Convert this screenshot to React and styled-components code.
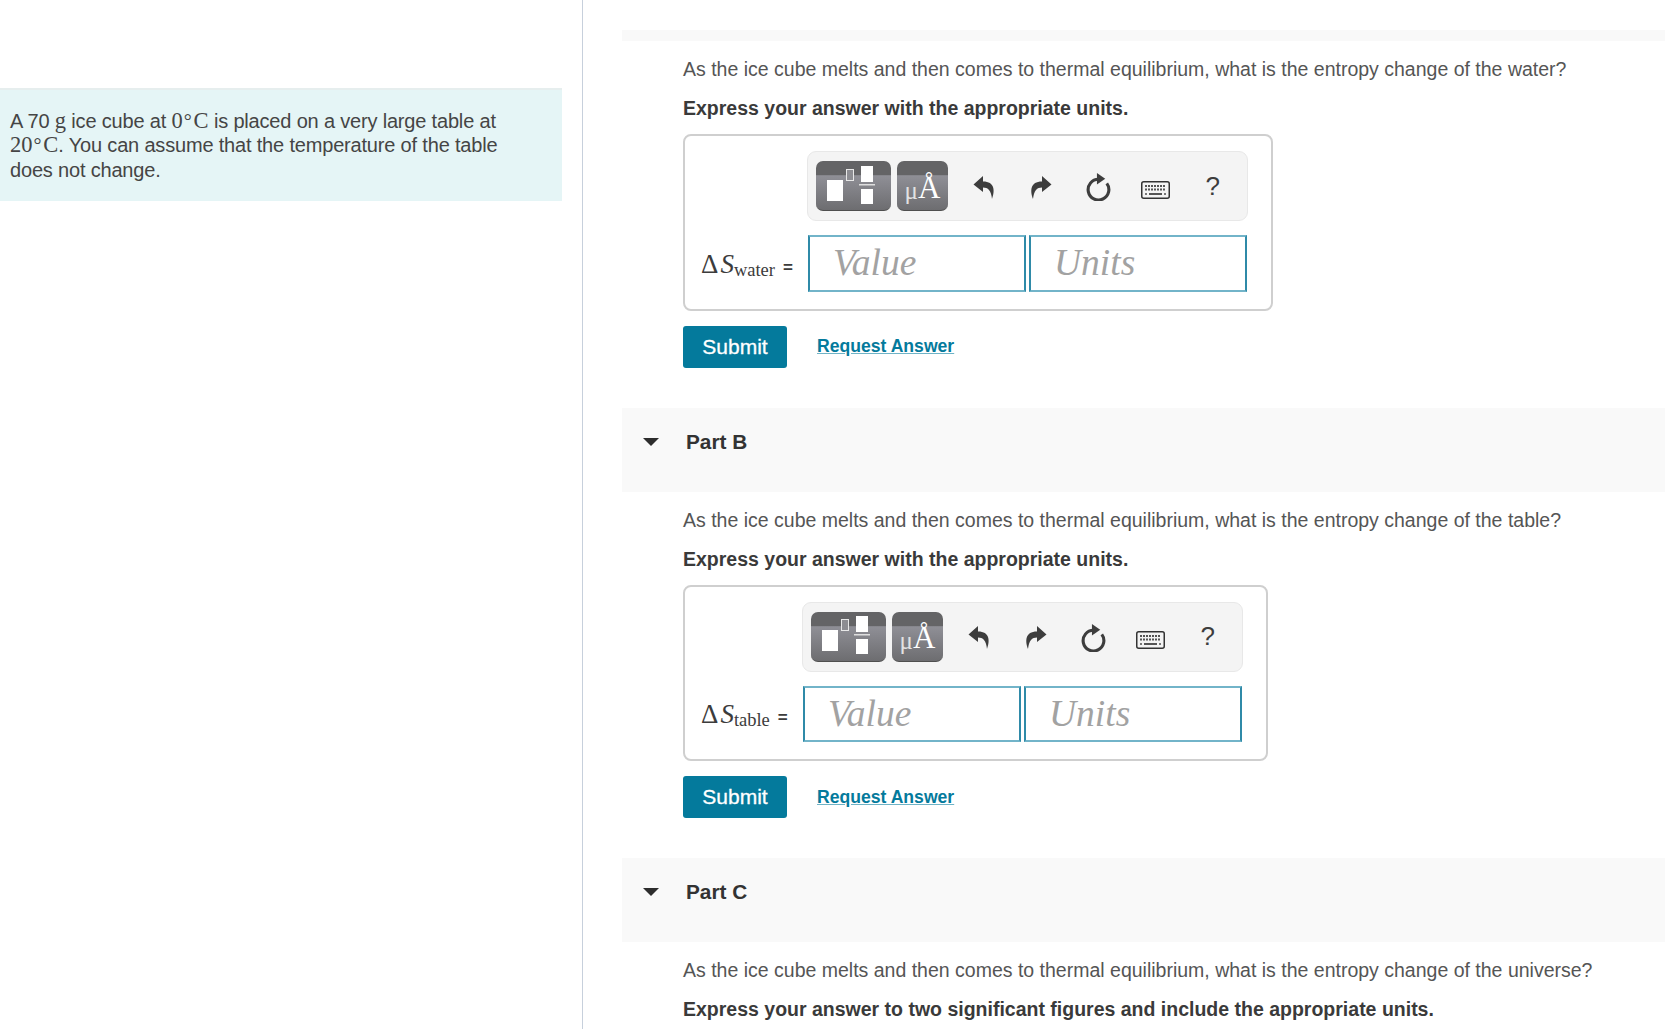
import React from 'react';
import styled, { createGlobalStyle } from 'styled-components';

const GlobalStyle = createGlobalStyle`
  html, body {
    margin: 0;
    padding: 0;
    height: 1029px;
    overflow: hidden;
    background: #fff;
    font-family: "Liberation Sans", Arial, sans-serif;
  }
`;

const Page = styled.div`
  display: flex;
  height: 1029px;
  overflow: hidden;
`;

const LeftColumn = styled.aside`
  flex: 0 0 583px;
  box-sizing: border-box;
  height: 1029px;
  padding: 88px 20px 0 0;
  border-right: 1px solid #c7d0dc;
`;

const Intro = styled.div`
  box-sizing: border-box;
  height: 113px;
  padding: 18.5px 50px 0 10px;
  border-top: 2px solid #e6eeee;
  background: #e5f5f6;
  color: #454545;
  font-size: 20px;
  line-height: 24.5px;
  letter-spacing: -0.18px;
`;

const MathText = styled.span`
  font-family: "Liberation Serif", "DejaVu Serif", serif;
  font-size: 22.5px;
  line-height: 20px;
  letter-spacing: 0;
`;

const Degree = styled.span`
  margin: 0 2px 0 1px;
  font-family: "Liberation Serif", serif;
  font-size: 20px;
  line-height: 20px;
`;

const RightColumn = styled.main`
  flex: 1;
  min-width: 0;
  padding: 30px 0 0 39px;
`;

const PartHeader = styled.div`
  display: flex;
  align-items: flex-start;
  box-sizing: border-box;
  height: ${(p) => (p.$slim ? '11px' : '84px')};
  padding: ${(p) => (p.$slim ? '0' : '19px 0 0 21px')};
  background: #f9f9f9;
`;

const Caret = styled.span`
  width: 0;
  height: 0;
  margin: 11px 27px 0 0;
  border-left: 8px solid transparent;
  border-right: 8px solid transparent;
  border-top: 8px solid #2d2d2d;
`;

const PartTitle = styled.h3`
  margin: 0;
  color: #333;
  font-size: 20.8px;
  line-height: 30px;
  font-weight: 700;
`;

const PartBody = styled.section`
  padding: 15px 0 0 61px;
  height: ${(p) => (p.$tail ? '100px' : '366.5px')};
  box-sizing: border-box;
`;

const Question = styled.p`
  margin: 0;
  color: #555;
  font-size: 19.5px;
  line-height: 26px;
`;

const Instruction = styled.p`
  margin: 13px 0 0;
  color: #3a3a3a;
  font-size: 19.5px;
  line-height: 26px;
  font-weight: 700;
`;

const AnswerBox = styled.div`
  display: flex;
  align-items: flex-end;
  box-sizing: border-box;
  width: ${(p) => p.$width}px;
  height: 176.5px;
  margin-top: 13px;
  padding: 0 23px 17px 16px;
  border: 2px solid #cfcfcf;
  border-radius: 8px;
`;

const Formula = styled.div`
  flex: 1;
  display: flex;
  align-items: baseline;
  height: 56px;
  line-height: 56px;
  color: #3c3c3c;
  font-family: "Liberation Serif", "DejaVu Serif", serif;
  font-size: 27px;
  white-space: nowrap;
`;

const Italic = styled.i`
  margin-left: 2px;
`;

const Sub = styled.sub`
  font-size: 18.5px;
  line-height: 0;
  vertical-align: -4px;
  position: relative;
  top: 3px;
`;

const Equals = styled.span`
  margin-left: 8px;
  font-family: "Liberation Sans", Arial, sans-serif;
  font-size: 17px;
  font-weight: 700;
`;

const Editor = styled.div`
  flex: 0 0 441px;
  display: flex;
  flex-direction: column;
  gap: 14px;
`;

const Toolbar = styled.div`
  display: flex;
  align-items: center;
  box-sizing: border-box;
  height: 70px;
  padding: 0 0 0 8px;
  border: 1px solid #e8e8e8;
  border-radius: 9px;
  background: #f4f4f4;
`;

const TemplateButton = styled.div`
  display: flex;
  align-items: center;
  justify-content: center;
  flex: 0 0 ${(p) => p.$width}px;
  box-sizing: border-box;
  height: 50px;
  margin-right: 6px;
  padding-top: ${(p) => p.$drop || 0}px;
  border-radius: 7px;
  border-bottom: 1px solid #4f4f4f;
  background: linear-gradient(#646466 0, #646466 28%, #8f8f96 30%, #6d6d70 100%);
  color: #fff;
  font-family: "Liberation Serif", serif;
  font-size: 31px;
  line-height: 46px;
`;

const MicroSign = styled.span`
  padding-top: 6px;
  font-size: 25px;
  color: #e2e2e2;
`;

const ToolIcons = styled.div`
  display: flex;
  align-items: center;
  margin-left: 1px;
`;

const ToolSlot = styled.div`
  display: flex;
  align-items: center;
  justify-content: center;
  width: 57.3px;
  height: 50px;
  padding-top: ${(p) => p.$drop || 0}px;
  box-sizing: border-box;
  color: #3d3d3d;
  font-size: 26px;
`;

const Fields = styled.div`
  display: flex;
  gap: 3px;
  padding: 0 1px;
`;

const Field = styled.div`
  flex: 1;
  box-sizing: border-box;
  height: 56.5px;
  padding-left: 23px;
  border: 2px solid #72b4c9;
  border-left-color: #2f8aa8;
  border-right-color: #2f8aa8;
  color: #a2a2a2;
  font-family: "Liberation Serif", serif;
  font-style: italic;
  font-size: 37.5px;
  line-height: 52px;
`;

const Actions = styled.div`
  display: flex;
  align-items: center;
  margin-top: 15px;
`;

const SubmitButton = styled.div`
  width: 104px;
  height: 42px;
  border-radius: 3px;
  background: #047a9c;
  color: #fff;
  font-size: 21px;
  line-height: 42px;
  text-align: center;
  -webkit-text-stroke: 0.3px #fff;
`;

const RequestLink = styled.a`
  margin: 0 0 0 30px;
  color: #047a9c;
  font-size: 17.6px;
  font-weight: 700;
  text-decoration: underline;
  text-decoration-color: #6fb3c6;
`;

const TemplateIcon = () => (
  <svg width="75" height="50" viewBox="0 0 75 50">
    <rect x="11" y="19" width="16" height="21" fill="#fff" />
    <rect x="30.5" y="8.5" width="7" height="11" fill="#8d8d92" stroke="#e8e8e8" />
    <rect x="45" y="5" width="12" height="16" fill="#fff" />
    <rect x="43" y="23" width="16" height="1.5" fill="#dedede" />
    <rect x="45" y="28" width="12" height="15" fill="#fff" />
  </svg>
);

const UndoIcon = ({ flip }) => (
  <svg
    width="24"
    height="26"
    viewBox="0 0 24 26"
    style={flip ? { transform: 'scaleX(-1)' } : undefined}
  >
    <path
      d="M11 2 L1.5 10.5 L11 18 V13.5 C16 13.5 19 16 20 25 C23 17 23 7.5 11 7.5 Z"
      fill="#3d3d3d"
    />
  </svg>
);

const ResetIcon = () => (
  <svg width="27" height="29" viewBox="0 0 26 28">
    <path
      d="M13 7 A10 10 0 1 0 21 11"
      fill="none"
      stroke="#3d3d3d"
      strokeWidth="3"
    />
    <path d="M11.5 1 L19.5 6.5 L11.5 12 Z" fill="#3d3d3d" />
  </svg>
);

const KeyboardIcon = () => (
  <svg width="29" height="18" viewBox="0 0 29 18">
    <rect x="0.75" y="0.75" width="27.5" height="16.5" rx="2" fill="#f4f4f4" stroke="#333" strokeWidth="1.5" />
    <path
      d="M4 5h21M4 8.5h21"
      stroke="#555"
      strokeWidth="2"
      strokeDasharray="2 1"
    />
    <path d="M8 13h13" stroke="#555" strokeWidth="2" />
    <path d="M4 13h2M23 13h2" stroke="#777" strokeWidth="2" />
  </svg>
);

function Answer({ subscript, width }) {
  return (
    <AnswerBox $width={width}>
      <Formula>
        Δ<Italic>S</Italic>
        <Sub>{subscript}</Sub>
        <Equals>=</Equals>
      </Formula>
      <Editor>
        <Toolbar>
          <TemplateButton $width={75}>
            <TemplateIcon />
          </TemplateButton>
          <TemplateButton $width={51} $drop={4}>
            <MicroSign>μ</MicroSign>Å
          </TemplateButton>
          <ToolIcons>
            <ToolSlot $drop={1}><UndoIcon /></ToolSlot>
            <ToolSlot $drop={1}><UndoIcon flip /></ToolSlot>
            <ToolSlot $drop={1}><ResetIcon /></ToolSlot>
            <ToolSlot $drop={7}><KeyboardIcon /></ToolSlot>
            <ToolSlot>?</ToolSlot>
          </ToolIcons>
        </Toolbar>
        <Fields>
          <Field>Value</Field>
          <Field>Units</Field>
        </Fields>
      </Editor>
    </AnswerBox>
  );
}

function Part({ title, target, subscript, width, instruction, tail }) {
  return (
    <>
      <PartHeader $slim={!title}>
        {title && (
          <>
            <Caret />
            <PartTitle>{title}</PartTitle>
          </>
        )}
      </PartHeader>
      <PartBody $tail={tail}>
        <Question>
          As the ice cube melts and then comes to thermal equilibrium, what is the entropy change of the {target}?
        </Question>
        <Instruction>{instruction}</Instruction>
        {!tail && (
          <>
            <Answer subscript={subscript} width={width} />
            <Actions>
              <SubmitButton>Submit</SubmitButton>
              <RequestLink>Request Answer</RequestLink>
            </Actions>
          </>
        )}
      </PartBody>
    </>
  );
}

export default function App() {
  return (
    <>
      <GlobalStyle />
      <Page>
        <LeftColumn>
          <Intro>
            A 70 <MathText>g</MathText> ice cube at <MathText>0</MathText><Degree>°</Degree><MathText>C</MathText> is placed on a very large table at <MathText>20</MathText><Degree>°</Degree><MathText>C</MathText>. You can assume that the temperature of the table does not change.
          </Intro>
        </LeftColumn>
        <RightColumn>
          <Part
            target="water"
            subscript="water"
            width={590}
            instruction="Express your answer with the appropriate units."
          />
          <Part
            title="Part B"
            target="table"
            subscript="table"
            width={585}
            instruction="Express your answer with the appropriate units."
          />
          <Part
            title="Part C"
            target="universe"
            tail
            instruction="Express your answer to two significant figures and include the appropriate units."
          />
        </RightColumn>
      </Page>
    </>
  );
}
